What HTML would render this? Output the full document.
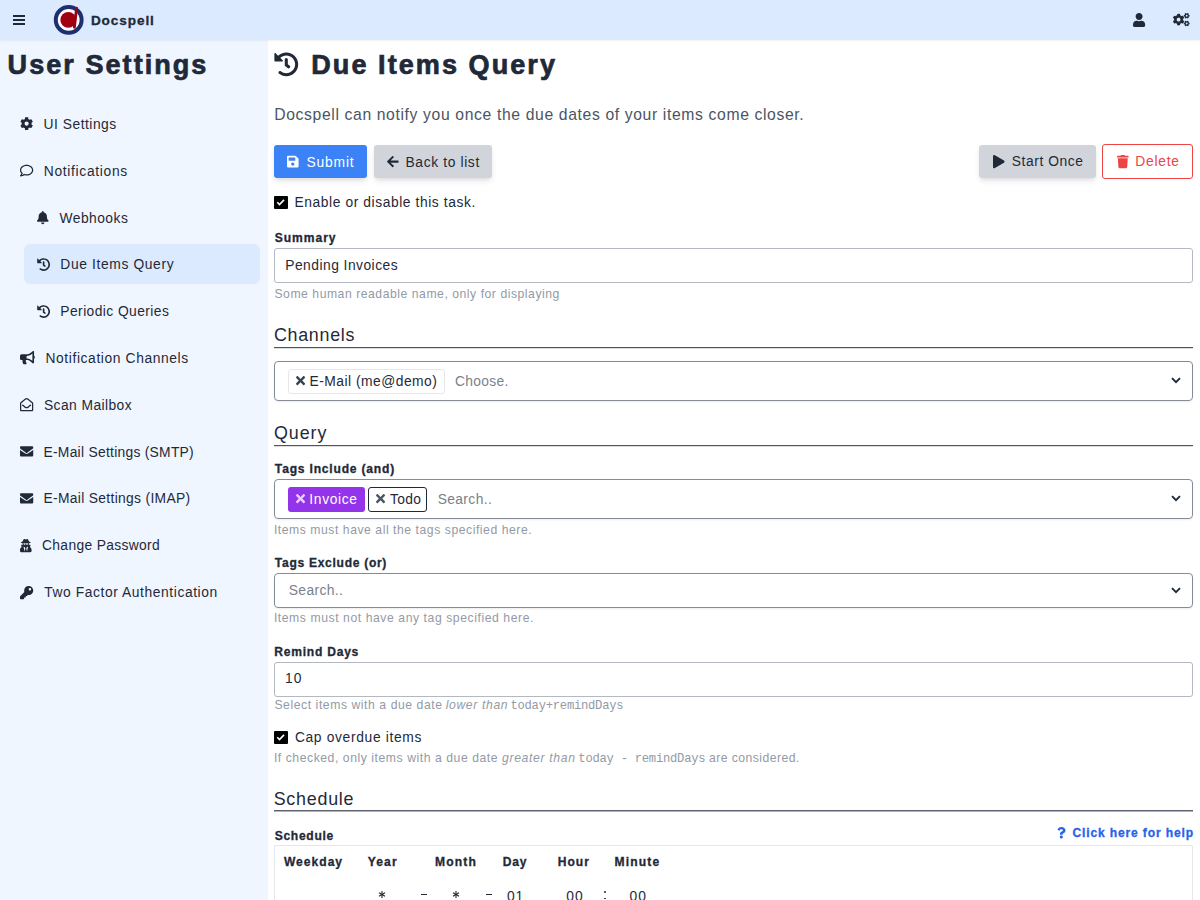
<!DOCTYPE html>
<html><head><meta charset="utf-8"><title>Docspell</title>
<style>
html,body{margin:0;padding:0;width:1200px;height:900px;overflow:hidden;background:#fff;font-family:"Liberation Sans",sans-serif}
.t{position:absolute;white-space:pre;line-height:20px;z-index:4}
.b{position:absolute}
.i{position:absolute;overflow:visible;z-index:3}
</style></head><body>
<div class=b style='left:0px;top:0px;width:1200px;height:40px;background:#dbeafe;box-shadow:0 1px 2px rgba(0,0,0,.06);z-index:2'></div>
<div class=b style='left:13px;top:15px;width:12px;height:2px;background:#1f2937;z-index:3'></div>
<div class=b style='left:13px;top:19px;width:12px;height:2px;background:#1f2937;z-index:3'></div>
<div class=b style='left:13px;top:23px;width:12px;height:2px;background:#1f2937;z-index:3'></div>
<svg class=i style='left:50px;top:2px;width:38px;height:36px;z-index:3' viewBox='0 0 38 36'><circle cx='18.7' cy='17.9' r='12.9' fill='#fff' stroke='#1d2f6f' stroke-width='4'/><circle cx='18.3' cy='17.9' r='7.9' fill='#a00012'/><line x1='26.6' y1='6.2' x2='24.4' y2='25.2' stroke='#a00012' stroke-width='2.9' stroke-linecap='round'/></svg>
<svg class=i style='z-index:3;left:1133.00px;top:13.04px;width:12.16px;height:13.90px' viewBox='0 0 448 512'><path fill='#1f2937' d='M224 256c70.7 0 128-57.3 128-128S294.7 0 224 0 96 57.3 96 128s57.3 128 128 128zm89.6 32h-16.7c-22.2 10.2-46.9 16-72.9 16s-50.6-5.8-72.9-16h-16.7C60.2 288 0 348.2 0 422.4V464c0 26.5 21.5 48 48 48h352c26.5 0 48-21.5 48-48v-41.6c0-74.2-60.2-134.4-134.4-134.4z'/></svg>
<svg class=i style='z-index:3;left:1173.30px;top:13.36px;width:16.62px;height:13.30px' viewBox='0 0 640 512'><path fill='#1f2937' d='M512.1 191l-8.2 14.3c-3 5.3-9.4 7.5-15.1 5.4-11.8-4.4-22.6-10.7-32.1-18.6-4.6-3.8-5.8-10.5-2.8-15.7l8.2-14.3c-6.9-8-12.3-17.3-15.9-27.4h-16.5c-6 0-11.2-4.3-12.2-10.3-2-12-2.1-24.6 0-37.1 1-6 6.2-10.4 12.2-10.4h16.5c3.6-10.1 9-19.4 15.9-27.4l-8.2-14.3c-3-5.2-1.9-11.9 2.8-15.7 9.5-7.9 20.4-14.2 32.1-18.6 5.7-2.1 12.1.1 15.1 5.4l8.2 14.3c10.5-1.9 21.2-1.9 31.7 0L552 6.3c3-5.3 9.4-7.5 15.1-5.4 11.8 4.4 22.6 10.7 32.1 18.6 4.6 3.8 5.8 10.5 2.8 15.7l-8.2 14.3c6.9 8 12.3 17.3 15.9 27.4h16.5c6 0 11.2 4.3 12.2 10.3 2 12 2.1 24.6 0 37.1-1 6-6.2 10.4-12.2 10.4h-16.5c-3.6 10.1-9 19.4-15.9 27.4l8.2 14.3c3 5.2 1.9 11.9-2.8 15.7-9.5 7.9-20.4 14.2-32.1 18.6-5.7 2.1-12.1-.1-15.1-5.4l-8.2-14.3c-10.4 1.9-21.2 1.9-31.7 0zm-10.5-58.8c38.5 29.6 82.4-14.3 52.8-52.8-38.5-29.7-82.4 14.3-52.8 52.8zM386.3 286.1l33.7 16.8c10.1 5.8 14.5 18.1 10.5 29.1-8.9 24.2-26.4 46.4-42.6 65.8-7.4 8.9-20.2 11.1-30.3 5.3l-29.1-16.8c-16 13.7-34.6 24.6-54.9 31.7v33.6c0 11.6-8.3 21.6-19.7 23.6-24.6 4.2-50.4 4.4-75.9 0-11.5-2-20-11.9-20-23.6V418c-20.3-7.2-38.9-18-54.9-31.7L74 403c-10 5.8-22.9 3.6-30.3-5.3-16.2-19.4-33.3-41.6-42.2-65.7-4-10.9.4-23.2 10.5-29.1l33.3-16.8c-3.9-20.9-3.9-42.4 0-63.4L12 205.8c-10.1-5.8-14.6-18.1-10.5-29 8.9-24.2 26-46.4 42.2-65.8 7.4-8.9 20.2-11.1 30.3-5.3l29.1 16.8c16-13.7 34.6-24.6 54.9-31.7V57.1c0-11.5 8.2-21.5 19.6-23.5 24.6-4.2 50.5-4.4 76-.1 11.5 2 20 11.9 20 23.6v33.6c20.3 7.2 38.9 18 54.9 31.7l29.1-16.8c10-5.8 22.9-3.6 30.3 5.3 16.2 19.4 33.2 41.6 42.1 65.8 4 10.9.1 23.2-10 29.1l-33.7 16.8c3.9 21 3.9 42.5 0 63.5zm-117.6 21.1c59.2-77-28.7-164.9-105.7-105.7-59.2 77 28.7 164.9 105.7 105.7zm243.4 182.7l-8.2 14.3c-3 5.3-9.4 7.5-15.1 5.4-11.8-4.4-22.6-10.7-32.1-18.6-4.6-3.8-5.8-10.5-2.8-15.7l8.2-14.3c-6.9-8-12.3-17.3-15.9-27.4h-16.5c-6 0-11.2-4.3-12.2-10.3-2-12-2.1-24.6 0-37.1 1-6 6.2-10.4 12.2-10.4h16.5c3.6-10.1 9-19.4 15.9-27.4l-8.2-14.3c-3-5.2-1.9-11.9 2.8-15.7 9.5-7.9 20.4-14.2 32.1-18.6 5.7-2.1 12.1.1 15.1 5.4l8.2 14.3c10.5-1.9 21.2-1.9 31.7 0l8.2-14.3c3-5.3 9.4-7.5 15.1-5.4 11.8 4.4 22.6 10.7 32.1 18.6 4.6 3.8 5.8 10.5 2.8 15.7l-8.2 14.3c6.9 8 12.3 17.3 15.9 27.4h16.5c6 0 11.2 4.3 12.2 10.3 2 12 2.1 24.6 0 37.1-1 6-6.2 10.4-12.2 10.4h-16.5c-3.6 10.1-9 19.4-15.9 27.4l8.2 14.3c3 5.2 1.9 11.9-2.8 15.7-9.5 7.9-20.4 14.2-32.1 18.6-5.7 2.1-12.1-.1-15.1-5.4l-8.2-14.3c-10.4 1.9-21.2 1.9-31.7 0zM501.6 431c38.5 29.6 82.4-14.3 52.8-52.8-38.5-29.6-82.4 14.3-52.8 52.8z'/></svg>
<div class=b style='left:0px;top:40px;width:267.5px;height:860px;background:#eff6ff'></div>
<div class=b style='left:23.7px;top:244px;width:236.5px;height:40px;background:#dbeafe;border-radius:6px'></div>
<svg class=i style='left:20.00px;top:117.41px;width:13.24px;height:13.24px' viewBox='0 0 512 512'><path fill='#1f2937' d='M487.4 315.7l-42.6-24.6c4.3-23.2 4.3-47 0-70.2l42.6-24.6c4.9-2.8 7.1-8.6 5.5-14-11.1-35.6-30-67.8-54.7-94.6-3.8-4.1-10-5.1-14.8-2.3L380.8 110c-17.9-15.4-38.5-27.3-60.8-35.1V25.8c0-5.6-3.9-10.5-9.4-11.7-36.7-8.2-74.3-7.8-109.200 0-5.5 1.2-9.4 6.1-9.4 11.7V75c-22.2 7.9-42.8 19.8-60.8 35.1L88.7 85.5c-4.9-2.8-11-1.9-14.8 2.3-24.7 26.7-43.6 58.9-54.7 94.6-1.7 5.4.6 11.2 5.5 14L67.3 221c-4.3 23.2-4.3 47 0 70.2l-42.6 24.6c-4.9 2.8-7.1 8.6-5.5 14 11.1 35.6 30 67.8 54.7 94.6 3.8 4.1 10 5.1 14.8 2.3l42.6-24.6c17.9 15.4 38.5 27.3 60.8 35.1v49.2c0 5.6 3.9 10.5 9.4 11.7 36.7 8.2 74.3 7.8 109.2 0 5.5-1.2 9.4-6.1 9.4-11.7v-49.2c22.2-7.900 42.8-19.8 60.8-35.1l42.6 24.6c4.9 2.8 11 1.9 14.8-2.3 24.7-26.7 43.6-58.9 54.7-94.6 1.5-5.5-.7-11.3-5.6-14.1zM256 336c-44.1 0-80-35.9-80-80s35.9-80 80-80 80 35.9 80 80-35.9 80-80 80z'/></svg>
<svg class=i style='left:20.00px;top:164.41px;width:13.24px;height:13.24px' viewBox='0 0 512 512'><path transform='translate(0 0)' fill='#1f2937' d='M256 32C114.6 32 0 125.1 0 240c0 47.6 19.9 91.2 52.9 126.3C38 405.7 7 439.1 6.5 439.5c-6.6 7-8.4 17.2-4.6 26S14.4 480 24 480c61.5 0 110-25.7 139.1-46.3C192 442.8 223.2 448 256 448c141.4 0 256-93.1 256-208S397.4 32 256 32zm0 368c-26.7 0-53.1-4.1-78.4-12.1l-22.7-7.2-19.5 13.8c-14.3 10.1-33.9 21.4-57.5 29 7.3-12.1 14.4-25.7 19.9-40.2l10.6-28.1-20.6-21.800C69.7 314.1 48 282.2 48 240c0-88.2 93.3-160 208-160s208 71.8 208 160-93.3 160-208 160z'/></svg>
<svg class=i style='left:36.70px;top:211.41px;width:11.59px;height:13.24px' viewBox='0 0 448 512'><path fill='#1f2937' d='M224 512c35.32 0 63.97-28.65 63.97-64H160.03c0 35.35 28.65 64 63.97 64zm215.39-149.71c-19.32-20.76-55.470-51.99-55.47-154.29 0-77.7-54.48-139.9-127.94-155.16V32c0-17.67-14.32-32-31.98-32s-31.98 14.33-31.98 32v20.84C118.56 68.1 64.08 130.3 64.08 208c0 102.3-36.15 133.53-55.47 154.29-6 6.45-8.66 14.16-8.61 21.71.11 16.4 12.98 32 32.1 32h383.8c19.12 0 32-15.6 32.1-32 .05-7.55-2.61-15.27-8.61-21.71z'/></svg>
<svg class=i style='left:36.70px;top:257.92px;width:13.24px;height:13.24px' viewBox='0 0 512 512'><path fill='#1f2937' d='M504 255.531c.253 136.64-111.18 248.372-247.82 248.468-59.015.042-113.223-20.53-155.822-54.911-11.077-8.94-11.905-25.541-1.839-35.607l11.267-11.267c8.609-8.609 22.353-9.551 31.891-1.984C173.062 425.135 212.781 440 256 440c101.705 0 184-82.311 184-184 0-101.705-82.311-184-184-184-48.814 0-93.149 18.969-126.068 49.932l50.754 50.754c10.08 10.08 2.941 27.314-11.313 27.314H24c-8.837 0-16-7.163-16-16V38.627c0-14.254 17.234-21.393 27.314-11.314l49.372 49.372C129.209 34.136 189.552 8 256 8c136.81 0 247.747 110.78 248 247.531zm-180.912 78.784l9.823-12.63c8.138-10.463 6.253-25.542-4.21-33.679L288 256.349V152c0-13.255-10.745-24-24-24h-16c-13.255 0-24 10.745-24 24v135.651l65.409 50.874c10.463 8.137 25.541 6.253 33.679-4.21z'/></svg>
<svg class=i style='left:36.70px;top:304.72px;width:13.24px;height:13.24px' viewBox='0 0 512 512'><path fill='#1f2937' d='M504 255.531c.253 136.64-111.18 248.372-247.82 248.468-59.015.042-113.223-20.53-155.822-54.911-11.077-8.94-11.905-25.541-1.839-35.607l11.267-11.267c8.609-8.609 22.353-9.551 31.891-1.984C173.062 425.135 212.781 440 256 440c101.705 0 184-82.311 184-184 0-101.705-82.311-184-184-184-48.814 0-93.149 18.969-126.068 49.932l50.754 50.754c10.08 10.08 2.941 27.314-11.313 27.314H24c-8.837 0-16-7.163-16-16V38.627c0-14.254 17.234-21.393 27.314-11.314l49.372 49.372C129.209 34.136 189.552 8 256 8c136.81 0 247.747 110.78 248 247.531zm-180.912 78.784l9.823-12.63c8.138-10.463 6.253-25.542-4.21-33.679L288 256.349V152c0-13.255-10.745-24-24-24h-16c-13.255 0-24 10.745-24 24v135.651l65.409 50.874c10.463 8.137 25.541 6.253 33.679-4.21z'/></svg>
<svg class=i style='left:20.00px;top:351.42px;width:14.89px;height:13.24px' viewBox='0 0 576 512'><path fill='#1f2937' d='M576 240c0-23.63-12.95-44.04-32-55.12V32.01C544 23.26 537.02 0 512 0c-7.12 0-14.19 2.38-19.98 7.020l-85.03 68.03C364.28 109.19 310.66 128 256 128H64c-35.35 0-64 28.65-64 64v96c0 35.35 28.65 64 64 64h33.7c-1.39 10.48-2.18 21.14-2.18 32 0 39.77 9.26 77.35 25.56 110.94 5.19 10.69 16.52 17.06 28.4 17.06h74.28c26.05 0 41.69-29.84 25.9-50.56-16.4-21.52-26.15-48.36-26.15-77.44 0-11.11 1.62-21.79 4.41-32H256c54.66 0 108.28 18.81 150.98 52.95l85.03 68.03a32.023 32.023 0 0 0 19.98 7.02c24.92 0 32-22.78 32-32V295.13C563.05 284.04 576 263.63 576 240zm-96 141.42l-33.05-26.44C392.95 311.78 325.12 288 256 288v-96c69.12 0 136.95-23.78 190.95-66.98L480 98.58v282.84z'/></svg>
<svg class=i style='left:20.00px;top:398.42px;width:13.24px;height:13.24px' viewBox='0 0 512 512'><path fill='#1f2937' d='M494.586 164.516c-4.697-3.883-111.723-89.95-135.251-108.657C337.231 38.191 299.437 0 256 0c-43.205 0-80.636 37.717-103.335 55.859-24.463 19.45-131.07 105.195-135.15 108.549A48.004 48.004 0 0 0 0 201.485V464c0 26.51 21.49 48 48 48h416c26.51 0 48-21.49 48-48V201.509a48 48 0 0 0-17.414-36.993zM464 458a6 6 0 0 1-6 6H54a6 6 0 0 1-6-6V204.347c0-1.813.816-3.526 2.226-4.665 15.87-12.814 108.793-87.554 132.364-106.293C200.755 78.88 232.398 48 256 48c23.693 0 55.857 31.369 73.41 45.389 23.573 18.741 116.503 93.493 132.366 106.316a5.99 5.99 0 0 1 2.224 4.663V458zm-31.991-187.704c4.249 5.159 3.465 12.795-1.745 16.981-28.975 23.283-59.274 47.597-70.929 56.863C336.636 362.283 299.205 400 256 400c-43.452 0-81.287-38.237-103.335-55.86-11.279-8.967-41.744-33.413-70.927-56.865-5.21-4.187-5.993-11.822-1.745-16.981l15.258-18.528c4.178-5.073 11.657-5.843 16.779-1.726 28.618 23.001 58.566 47.035 70.56 56.571C200.143 320.631 232.307 352 256 352c23.602 0 55.246-30.88 73.41-45.389 11.994-9.535 41.944-33.57 70.563-56.568 5.122-4.116 12.601-3.346 16.778 1.727l15.258 18.526z'/></svg>
<svg class=i style='left:20.00px;top:445.42px;width:13.24px;height:13.24px' viewBox='0 0 512 512'><path fill='#1f2937' d='M502.3 190.8c3.9-3.1 9.7-.2 9.7 4.7V400c0 26.5-21.5 48-48 48H48c-26.5 0-48-21.5-48-48V195.6c0-5 5.7-7.8 9.7-4.7 22.4 17.4 52.1 39.5 154.1 113.6 21.1 15.4 56.7 47.8 92.2 47.6 35.7.3 72-32.8 92.3-47.6 102-74.1 131.6-96.300 154-113.7zM256 320c23.2.4 56.6-42.4 73.4-54.6 132.7-96.3 142.8-104.7 173.4-128.7 5.8-4.5 9.2-11.5 9.2-18.9v-19c0-26.5-21.5-48-48-48H48C21.5 48 0 69.5 0 96v19c0 7.4 3.4 14.3 9.2 18.9 30.6 23.9 40.7 32.4 173.4 128.7 16.8 12.2 50.2 55.1 73.4 54.7z'/></svg>
<svg class=i style='left:20.00px;top:491.92px;width:13.24px;height:13.24px' viewBox='0 0 512 512'><path fill='#1f2937' d='M502.3 190.8c3.9-3.1 9.7-.2 9.7 4.7V400c0 26.5-21.5 48-48 48H48c-26.5 0-48-21.5-48-48V195.6c0-5 5.7-7.8 9.7-4.7 22.4 17.4 52.1 39.5 154.1 113.6 21.1 15.4 56.7 47.8 92.2 47.6 35.7.3 72-32.8 92.3-47.6 102-74.1 131.6-96.300 154-113.7zM256 320c23.2.4 56.6-42.4 73.4-54.6 132.7-96.3 142.8-104.7 173.4-128.7 5.8-4.5 9.2-11.5 9.2-18.9v-19c0-26.5-21.5-48-48-48H48C21.5 48 0 69.5 0 96v19c0 7.4 3.4 14.3 9.2 18.9 30.6 23.9 40.7 32.4 173.4 128.7 16.8 12.2 50.2 55.1 73.4 54.7z'/></svg>
<svg class=i style='left:19.60px;top:538.91px;width:11.59px;height:13.24px' viewBox='0 0 448 512'><path fill='#1f2937' d='M383.9 308.3l23.9-62.6c4-10.5-3.7-21.7-15-21.7h-58.5c11-18.9 17.8-40.6 17.8-64v-.3c39.2-7.8 64-19.1 64-31.7 0-13.3-27.3-25.1-70.1-33-9.2-32.8-27-65.8-40.6-82.8-9.5-11.9-25.9-15.6-39.5-8.8l-27.6 13.8c-9 4.5-19.6 4.5-28.6 0L182.1 3.4c-13.6-6.8-30-3.1-39.5 8.8-13.5 17-31.4 50-40.6 82.8-42.7 7.9-70 19.7-70 33 0 12.6 24.8 23.9 64 31.7v.3c0 23.4 6.8 45.1 17.8 64H56.3c-11.5 0-19.2 11.7-14.7 22.3l25.8 60.2C27.3 329.8 0 372.7 0 422.4v44.8C0 491.9 20.1 512 44.8 512h358.4c24.7 0 44.8-20.1 44.8-44.8v-44.8c0-48.4-25.8-90.4-64.1-114.1zM176 480l-41.6-192 49.6 32 24 40-32 120zm96 0l-32-120 24-40 49.6-32L272 480zm41.7-298.5c-3.9 11.9-7 24.6-16.5 33.4-10.1 9.3-48 22.4-64-25-2.8-8.4-15.4-8.4-18.3 0-17 50.2-56 32.4-64 25-9.5-8.8-12.7-21.5-16.5-33.4-.8-2.5-6.3-5.7-6.3-5.8v-10.8c28.3 3.6 61 5.8 96 5.8s67.7-2.1 96-5.8v10.8c-.1.1-5.6 3.2-6.4 5.8z'/></svg>
<svg class=i style='left:19.60px;top:585.81px;width:13.24px;height:13.24px' viewBox='0 0 512 512'><path fill='#1f2937' d='M512 176.001C512 273.203 433.202 352 336 352c-11.22 0-22.19-1.062-32.827-3.069l-24.012 27.014A23.999 23.999 0 0 1 261.223 384H224v40c0 13.255-10.745 24-24 24h-40v40c0 13.255-10.745 24-24 24H24c-13.255 0-24-10.745-24-24v-78.059c0-6.365 2.529-12.47 7.029-16.971l161.802-161.802C163.108 213.814 160 195.271 160 176 160 78.798 238.797.001 335.999 0 433.488-.001 512 78.511 512 176.001zM336 128c0 26.51 21.49 48 48 48s48-21.490 48-48-21.49-48-48-48-48 21.49-48 48z'/></svg>
<svg class=i style='left:274.30px;top:52.07px;width:24.60px;height:24.60px' viewBox='0 0 512 512'><path fill='#1f2937' d='M504 255.531c.253 136.64-111.18 248.372-247.82 248.468-59.015.042-113.223-20.53-155.822-54.911-11.077-8.94-11.905-25.541-1.839-35.607l11.267-11.267c8.609-8.609 22.353-9.551 31.891-1.984C173.062 425.135 212.781 440 256 440c101.705 0 184-82.311 184-184 0-101.705-82.311-184-184-184-48.814 0-93.149 18.969-126.068 49.932l50.754 50.754c10.08 10.08 2.941 27.314-11.313 27.314H24c-8.837 0-16-7.163-16-16V38.627c0-14.254 17.234-21.393 27.314-11.314l49.372 49.372C129.209 34.136 189.552 8 256 8c136.81 0 247.747 110.78 248 247.531zm-180.912 78.784l9.823-12.63c8.138-10.463 6.253-25.542-4.21-33.679L288 256.349V152c0-13.255-10.745-24-24-24h-16c-13.255 0-24 10.745-24 24v135.651l65.409 50.874c10.463 8.137 25.541 6.253 33.679-4.21z'/></svg>
<div class=b style='left:274px;top:145px;width:93px;height:33px;background:#3b82f6;border-radius:3px;box-shadow:0 4px 6px -1px rgba(0,0,0,.1),0 2px 4px -1px rgba(0,0,0,.06)'></div>
<svg class=i style='left:287.00px;top:155.01px;width:11.59px;height:13.24px' viewBox='0 0 448 512'><path fill='#ffffff' d='M433.941 129.941l-83.882-83.882A48 48 0 0 0 316.118 32H48C21.49 32 0 53.49 0 80v352c0 26.51 21.49 48 48 48h352c26.51 0 48-21.49 48-48V163.882a48 48 0 0 0-14.059-33.941zM224 416c-35.346 0-64-28.654-64-64 0-35.346 28.654-64 64-64s64 28.654 64 64c0 35.346-28.654 64-64 64zm96-304.52V212c0 6.627-5.373 12-12 12H76c-6.627 0-12-5.373-12-12V108c0-6.627 5.373-12 12-12h228.52c3.183 0 6.235 1.264 8.485 3.515l3.48 3.48A11.996 11.996 0 0 1 320 111.48z'/></svg>
<div class=b style='left:374px;top:145px;width:118px;height:33px;background:#d1d5db;border-radius:3px;box-shadow:0 4px 6px -1px rgba(0,0,0,.1),0 2px 4px -1px rgba(0,0,0,.06)'></div>
<svg class=i style='left:386.80px;top:155.01px;width:11.59px;height:13.24px' viewBox='0 0 448 512'><path fill='#1f2937' d='M257.5 445.1l-22.2 22.2c-9.4 9.4-24.6 9.4-33.9 0L7 273c-9.4-9.4-9.4-24.6 0-33.9L201.4 44.7c9.4-9.4 24.6-9.4 33.9 0l22.2 22.2c9.5 9.5 9.3 25-.4 34.3L136.6 216H424c13.3 0 24 10.7 24 24v32c0 13.3-10.7 24-24 24H136.6l120.5 114.8c9.8 9.3 10 24.8.4 34.3z'/></svg>
<div class=b style='left:979px;top:145px;width:117px;height:33px;background:#d1d5db;border-radius:3px;box-shadow:0 4px 6px -1px rgba(0,0,0,.1),0 2px 4px -1px rgba(0,0,0,.06)'></div>
<svg class=i style='left:992.50px;top:154.61px;width:11.59px;height:13.24px' viewBox='0 0 448 512'><path fill='#1f2937' d='M424.4 214.7L72.4 6.6C43.8-10.3 0 6.1 0 47.9V464c0 37.5 40.7 60.1 72.4 41.3l352-208c31.4-18.5 31.5-64.1 0-82.6z'/></svg>
<div class=b style='left:1102px;top:144px;width:91px;height:35px;background:#fff;border:1px solid #ef4444;border-radius:3px;box-sizing:border-box'></div>
<svg class=i style='left:1116.80px;top:154.61px;width:11.59px;height:13.24px' viewBox='0 0 448 512'><path fill='#ef4444' d='M432 32H312l-9.4-18.7A24 24 0 0 0 281.1 0H166.8a23.72 23.72 0 0 0-21.4 13.3L136 32H16A16 16 0 0 0 0 48v32a16 16 0 0 0 16 16h416a16 16 0 0 0 16-16V48a16 16 0 0 0-16-16zM53.2 467a48 48 0 0 0 47.9 45h245.8a48 48 0 0 0 47.9-45L416 128H32z'/></svg>
<div class=b style='left:274.2px;top:196px;width:13.6px;height:13px;background:#000;border-radius:1px'></div><svg class=i style='left:274.2px;top:196px;width:13.6px;height:13px' viewBox='0 0 13.6 13'><polyline points='3.3,6.3 5.5,8.6 10,3.9' fill='none' stroke='#fff' stroke-width='1.6'/></svg>
<div class=b style='left:274px;top:248px;width:919px;height:35px;border:1px solid #b3b8c1;border-radius:3px;box-sizing:border-box'></div>
<div class=b style='left:274px;top:347px;width:919px;height:1px;background:#4b5563;box-shadow:0 1px 0 rgba(75,85,99,.2)'></div>
<div class=b style='left:274px;top:361px;width:919px;height:40px;border:1px solid #858c98;border-radius:4px;box-sizing:border-box;box-shadow:0 1px 2px rgba(0,0,0,.08)'></div>
<div class=b style='left:288px;top:369px;width:157px;height:25px;border:1px solid #e5e7eb;border-radius:3px;box-sizing:border-box;background:#fff'></div>
<svg class=i style='left:296.00px;top:374.42px;width:9.10px;height:13.24px' viewBox='0 0 352 512'><path fill='#374151' d='M242.72 256l100.07-100.07c12.28-12.28 12.28-32.19 0-44.48l-22.24-22.24c-12.28-12.28-32.19-12.28-44.48 0L176 189.28 75.93 89.21c-12.28-12.28-32.19-12.28-44.48 0L9.21 111.45c-12.28 12.28-12.28 32.19 0 44.48L109.28 256 9.21 356.07c-12.28 12.28-12.28 32.19 0 44.48l22.24 22.24c12.28 12.28 32.2 12.28 44.48 0L176 322.72l100.07 100.07c12.28 12.28 32.2 12.28 44.48 0l22.24-22.24c12.28-12.28 12.28-32.19 0-44.48L242.72 256z'/></svg>
<svg class=i style='left:1171px;top:377.4px;width:10px;height:7px' viewBox='0 0 10 7'><polyline points='1,1.2 5,5.2 9,1.2' fill='none' stroke='#1f2937' stroke-width='1.9'/></svg>
<div class=b style='left:274px;top:445px;width:919px;height:1px;background:#4b5563;box-shadow:0 1px 0 rgba(75,85,99,.2)'></div>
<div class=b style='left:274px;top:479px;width:919px;height:40px;border:1px solid #858c98;border-radius:4px;box-sizing:border-box;box-shadow:0 1px 2px rgba(0,0,0,.08)'></div>
<div class=b style='left:288px;top:487px;width:77px;height:25px;background:#9333ea;border-radius:3px'></div>
<svg class=i style='left:296.00px;top:492.42px;width:9.10px;height:13.24px' viewBox='0 0 352 512'><path fill='#e6d3fb' d='M242.72 256l100.07-100.07c12.28-12.28 12.28-32.19 0-44.48l-22.24-22.24c-12.28-12.28-32.19-12.28-44.48 0L176 189.28 75.93 89.21c-12.28-12.28-32.19-12.28-44.48 0L9.21 111.45c-12.28 12.28-12.28 32.19 0 44.48L109.28 256 9.21 356.07c-12.28 12.28-12.28 32.19 0 44.48l22.24 22.24c12.28 12.28 32.2 12.28 44.48 0L176 322.72l100.07 100.07c12.28 12.28 32.2 12.28 44.48 0l22.24-22.24c12.28-12.28 12.28-32.19 0-44.48L242.72 256z'/></svg>
<div class=b style='left:368px;top:487px;width:59px;height:25px;border:1px solid #1f2937;border-radius:3px;box-sizing:border-box'></div>
<svg class=i style='left:375.80px;top:492.42px;width:9.10px;height:13.24px' viewBox='0 0 352 512'><path fill='#4b5563' d='M242.72 256l100.07-100.07c12.28-12.28 12.28-32.19 0-44.48l-22.24-22.24c-12.28-12.28-32.19-12.28-44.48 0L176 189.28 75.93 89.21c-12.28-12.28-32.19-12.28-44.48 0L9.21 111.45c-12.28 12.28-12.28 32.19 0 44.48L109.28 256 9.21 356.07c-12.28 12.28-12.28 32.19 0 44.48l22.24 22.24c12.28 12.28 32.2 12.28 44.48 0L176 322.72l100.07 100.07c12.28 12.28 32.2 12.28 44.48 0l22.24-22.24c12.28-12.28 12.28-32.19 0-44.48L242.72 256z'/></svg>
<svg class=i style='left:1171px;top:495.2px;width:10px;height:7px' viewBox='0 0 10 7'><polyline points='1,1.2 5,5.2 9,1.2' fill='none' stroke='#1f2937' stroke-width='1.9'/></svg>
<div class=b style='left:274px;top:573px;width:919px;height:35px;border:1px solid #858c98;border-radius:4px;box-sizing:border-box;box-shadow:0 1px 2px rgba(0,0,0,.08)'></div>
<svg class=i style='left:1171px;top:586.6px;width:10px;height:7px' viewBox='0 0 10 7'><polyline points='1,1.2 5,5.2 9,1.2' fill='none' stroke='#1f2937' stroke-width='1.9'/></svg>
<div class=b style='left:274px;top:662px;width:919px;height:35px;border:1px solid #b3b8c1;border-radius:3px;box-sizing:border-box'></div>
<div class=b style='left:274px;top:731.4px;width:13.6px;height:13px;background:#000;border-radius:1px'></div><svg class=i style='left:274px;top:731.4px;width:13.6px;height:13px' viewBox='0 0 13.6 13'><polyline points='3.3,6.3 5.5,8.6 10,3.9' fill='none' stroke='#fff' stroke-width='1.6'/></svg>
<div class=b style='left:274px;top:810px;width:919px;height:1px;background:#5b6270;box-shadow:0 1px 0 rgba(107,114,128,.55)'></div>
<svg class=i style='left:1057.30px;top:827.39px;width:8.66px;height:11.55px' viewBox='0 0 384 512'><path fill='#2563eb' d='M202.021 0C122.202 0 70.503 32.703 29.914 91.026c-7.363 10.58-5.093 25.086 5.178 32.874l43.138 32.709c10.373 7.865 25.132 6.026 33.253-4.148 25.049-31.381 43.63-49.449 82.757-49.449 30.764 0 68.816 19.799 68.816 49.631 0 22.552-18.617 34.134-48.993 51.164-35.423 19.86-82.299 44.576-82.299 106.405V320c0 13.255 10.745 24 24 24h72.471c13.255 0 24-10.745 24-24v-5.773c0-42.86 125.268-44.645 125.268-160.627C377.504 66.256 286.902 0 202.021 0zM192 373.459c-38.196 0-69.271 31.075-69.271 69.271 0 38.195 31.075 69.27 69.271 69.27s69.271-31.075 69.271-69.271-31.075-69.27-69.271-69.27z'/></svg>
<div class=b style='left:274px;top:845px;width:919px;height:80px;border:1px solid #e5e7eb;border-radius:1px;box-sizing:border-box'></div>
<svg class=i style='left:377.9px;top:890px;width:8px;height:10px' viewBox='-4 -4 8 10'><g stroke='#1f2937' stroke-width='1.1'><line x1='0' y1='-3' x2='0' y2='4'/><line x1='-3' y1='-1.2' x2='3' y2='2.2'/><line x1='-3' y1='2.2' x2='3' y2='-1.2'/></g></svg>
<svg class=i style='left:452.4px;top:890px;width:8px;height:10px' viewBox='-4 -4 8 10'><g stroke='#1f2937' stroke-width='1.1'><line x1='0' y1='-3' x2='0' y2='4'/><line x1='-3' y1='-1.2' x2='3' y2='2.2'/><line x1='-3' y1='2.2' x2='3' y2='-1.2'/></g></svg>
<div class=b style='left:421.2px;top:894.2px;width:5.8px;height:1.3px;background:#1f2937'></div>
<div class=b style='left:485.8px;top:894.2px;width:5.8px;height:1.3px;background:#1f2937'></div>
<div class=b style='left:604.2px;top:891px;width:1.8px;height:1.8px;background:#1f2937;border-radius:1px'></div>
<div class=b style='left:604.2px;top:897.5px;width:1.8px;height:1.8px;background:#1f2937;border-radius:1px'></div>
<div class=t style='left:90.89px;top:11px;font-family:"Liberation Sans";font-weight:700;font-size:13.58px;letter-spacing:0.913px;color:#1f2937;-webkit-text-stroke:0.30px #1f2937;'>Docspell</div>
<div class=t style='left:7.57px;top:55px;font-family:"Liberation Sans";font-weight:700;font-size:27.07px;letter-spacing:2.034px;color:#1f2937;-webkit-text-stroke:0.70px #1f2937;'>User Settings</div>
<div class=t style='left:43.53px;top:114px;font-family:"Liberation Sans";font-size:13.84px;letter-spacing:0.507px;color:#1f2937;'>UI Settings</div>
<div class=t style='left:43.77px;top:161px;font-family:"Liberation Sans";font-size:13.84px;letter-spacing:0.681px;color:#1f2937;'>Notifications</div>
<div class=t style='left:59.54px;top:208px;font-family:"Liberation Sans";font-size:13.84px;letter-spacing:0.455px;color:#1f2937;'>Webhooks</div>
<div class=t style='left:60.37px;top:254px;font-family:"Liberation Sans";font-size:13.84px;letter-spacing:0.619px;color:#1f2937;'>Due Items Query</div>
<div class=t style='left:60.37px;top:301px;font-family:"Liberation Sans";font-size:13.84px;letter-spacing:0.417px;color:#1f2937;'>Periodic Queries</div>
<div class=t style='left:45.47px;top:348px;font-family:"Liberation Sans";font-size:13.84px;letter-spacing:0.603px;color:#1f2937;'>Notification Channels</div>
<div class=t style='left:43.97px;top:395px;font-family:"Liberation Sans";font-size:13.84px;letter-spacing:0.425px;color:#1f2937;'>Scan Mailbox</div>
<div class=t style='left:43.47px;top:442px;font-family:"Liberation Sans";font-size:13.84px;letter-spacing:0.276px;color:#1f2937;'>E-Mail Settings (SMTP)</div>
<div class=t style='left:43.47px;top:488px;font-family:"Liberation Sans";font-size:13.84px;letter-spacing:0.325px;color:#1f2937;'>E-Mail Settings (IMAP)</div>
<div class=t style='left:42.00px;top:535px;font-family:"Liberation Sans";font-size:13.84px;letter-spacing:0.338px;color:#1f2937;'>Change Password</div>
<div class=t style='left:44.19px;top:582px;font-family:"Liberation Sans";font-size:13.84px;letter-spacing:0.580px;color:#1f2937;'>Two Factor Authentication</div>
<div class=t style='left:311.29px;top:55px;font-family:"Liberation Sans";font-weight:700;font-size:27.07px;letter-spacing:2.042px;color:#1f2937;-webkit-text-stroke:0.70px #1f2937;'>Due Items Query</div>
<div class=t style='left:274.21px;top:105px;font-family:"Liberation Sans";font-size:15.73px;letter-spacing:0.630px;color:#4b5563;'>Docspell can notify you once the due dates of your items come closer.</div>
<div class=t style='left:306.57px;top:152px;font-family:"Liberation Sans";font-size:13.84px;letter-spacing:0.799px;color:#ffffff;'>Submit</div>
<div class=t style='left:405.47px;top:152px;font-family:"Liberation Sans";font-size:13.84px;letter-spacing:0.627px;color:#1f2937;'>Back to list</div>
<div class=t style='left:1011.77px;top:151px;font-family:"Liberation Sans";font-size:13.84px;letter-spacing:0.572px;color:#1f2937;'>Start Once</div>
<div class=t style='left:1135.27px;top:151px;font-family:"Liberation Sans";font-size:13.84px;letter-spacing:0.749px;color:#ef4444;'>Delete</div>
<div class=t style='left:294.47px;top:192px;font-family:"Liberation Sans";font-size:13.84px;letter-spacing:0.574px;color:#1f2937;'>Enable or disable this task.</div>
<div class=t style='left:274.75px;top:228px;font-family:"Liberation Sans";font-weight:700;font-size:12.07px;letter-spacing:0.966px;color:#1f2937;-webkit-text-stroke:0.30px #1f2937;'>Summary</div>
<div class=t style='left:285.27px;top:255px;font-family:"Liberation Sans";font-size:13.84px;letter-spacing:0.467px;color:#1f2937;'>Pending Invoices</div>
<div class=t style='left:274.45px;top:284px;font-family:"Liberation Sans";font-size:12.18px;letter-spacing:0.540px;color:#939aa6;'>Some human readable name, only for displaying</div>
<div class=t style='left:273.89px;top:325px;font-family:"Liberation Sans";font-size:17.87px;letter-spacing:0.726px;color:#1f2937;'>Channels</div>
<div class=t style='left:309.47px;top:371px;font-family:"Liberation Sans";font-size:13.84px;letter-spacing:0.488px;color:#1f2937;'>E-Mail (me@demo)</div>
<div class=t style='left:454.90px;top:371px;font-family:"Liberation Sans";font-size:13.84px;letter-spacing:0.328px;color:#7b818c;'>Choose.</div>
<div class=t style='left:273.95px;top:423px;font-family:"Liberation Sans";font-size:17.87px;letter-spacing:0.959px;color:#1f2937;'>Query</div>
<div class=t style='left:274.86px;top:459px;font-family:"Liberation Sans";font-weight:700;font-size:12.07px;letter-spacing:0.805px;color:#1f2937;-webkit-text-stroke:0.30px #1f2937;'>Tags Include (and)</div>
<div class=t style='left:309.32px;top:489px;font-family:"Liberation Sans";font-size:13.84px;letter-spacing:0.655px;color:#ffffff;'>Invoice</div>
<div class=t style='left:390.09px;top:489px;font-family:"Liberation Sans";font-size:13.84px;letter-spacing:0.334px;color:#1f2937;'>Todo</div>
<div class=t style='left:437.67px;top:489px;font-family:"Liberation Sans";font-size:13.84px;letter-spacing:0.371px;color:#7b818c;'>Search..</div>
<div class=t style='left:273.88px;top:520px;font-family:"Liberation Sans";font-size:12.18px;letter-spacing:0.550px;color:#939aa6;'>Items must have all the tags specified here.</div>
<div class=t style='left:274.86px;top:553px;font-family:"Liberation Sans";font-weight:700;font-size:12.07px;letter-spacing:0.700px;color:#1f2937;-webkit-text-stroke:0.30px #1f2937;'>Tags Exclude (or)</div>
<div class=t style='left:288.77px;top:580px;font-family:"Liberation Sans";font-size:13.84px;letter-spacing:0.371px;color:#7b818c;'>Search..</div>
<div class=t style='left:273.88px;top:608px;font-family:"Liberation Sans";font-size:12.18px;letter-spacing:0.572px;color:#939aa6;'>Items must not have any tag specified here.</div>
<div class=t style='left:274.19px;top:642px;font-family:"Liberation Sans";font-weight:700;font-size:12.07px;letter-spacing:0.771px;color:#1f2937;-webkit-text-stroke:0.30px #1f2937;'>Remind Days</div>
<div class=t style='left:285.05px;top:668px;font-family:"Liberation Sans";font-size:13.84px;letter-spacing:0.888px;color:#1f2937;'>10</div>
<div class=t style='left:274.45px;top:695px;font-family:"Liberation Sans";font-size:12.18px;letter-spacing:0.567px;color:#939aa6;'>Select items with a due date</div>
<div class=t style='left:445.70px;top:695px;font-family:"Liberation Sans";font-style:italic;font-size:12.18px;letter-spacing:0.638px;color:#939aa6;'>lower than</div>
<div class=t style='left:510.47px;top:696px;font-family:"Liberation Mono";font-size:12.18px;letter-spacing:-0.253px;color:#939aa6;'>today+remindDays</div>
<div class=t style='left:294.90px;top:727px;font-family:"Liberation Sans";font-size:13.84px;letter-spacing:0.650px;color:#1f2937;'>Cap overdue items</div>
<div class=t style='left:273.88px;top:748px;font-family:"Liberation Sans";font-size:12.18px;letter-spacing:0.559px;color:#939aa6;'>If checked, only items with a due date</div>
<div class=t style='left:501.98px;top:748px;font-family:"Liberation Sans";font-style:italic;font-size:12.18px;letter-spacing:0.669px;color:#939aa6;'>greater than</div>
<div class=t style='left:578.37px;top:749px;font-family:"Liberation Mono";font-size:12.18px;letter-spacing:-0.253px;color:#939aa6;'>today - remindDays</div>
<div class=t style='left:708.98px;top:748px;font-family:"Liberation Sans";font-size:12.18px;letter-spacing:0.457px;color:#939aa6;'>are considered.</div>
<div class=t style='left:273.69px;top:789px;font-family:"Liberation Sans";font-size:17.87px;letter-spacing:0.761px;color:#1f2937;'>Schedule</div>
<div class=t style='left:274.65px;top:826px;font-family:"Liberation Sans";font-weight:700;font-size:12.07px;letter-spacing:0.716px;color:#1f2937;-webkit-text-stroke:0.30px #1f2937;'>Schedule</div>
<div class=t style='left:1072.50px;top:823px;font-family:"Liberation Sans";font-weight:700;font-size:12.07px;letter-spacing:0.849px;color:#2563eb;-webkit-text-stroke:0.30px #2563eb;'>Click here for help</div>
<div class=t style='left:283.89px;top:852px;font-family:"Liberation Sans";font-weight:700;font-size:12.07px;letter-spacing:1.019px;color:#1f2937;-webkit-text-stroke:0.30px #1f2937;'>Weekday</div>
<div class=t style='left:367.79px;top:852px;font-family:"Liberation Sans";font-weight:700;font-size:12.07px;letter-spacing:1.108px;color:#1f2937;-webkit-text-stroke:0.30px #1f2937;'>Year</div>
<div class=t style='left:435.09px;top:852px;font-family:"Liberation Sans";font-weight:700;font-size:12.07px;letter-spacing:1.140px;color:#1f2937;-webkit-text-stroke:0.30px #1f2937;'>Month</div>
<div class=t style='left:502.69px;top:852px;font-family:"Liberation Sans";font-weight:700;font-size:12.07px;letter-spacing:0.878px;color:#1f2937;-webkit-text-stroke:0.30px #1f2937;'>Day</div>
<div class=t style='left:557.69px;top:852px;font-family:"Liberation Sans";font-weight:700;font-size:12.07px;letter-spacing:1.001px;color:#1f2937;-webkit-text-stroke:0.30px #1f2937;'>Hour</div>
<div class=t style='left:614.49px;top:852px;font-family:"Liberation Sans";font-weight:700;font-size:12.07px;letter-spacing:1.148px;color:#1f2937;-webkit-text-stroke:0.30px #1f2937;'>Minute</div>
<div class=t style='left:507.06px;top:886px;font-family:"Liberation Sans";font-size:13.84px;letter-spacing:0.752px;color:#1f2937;'>01</div>
<div class=t style='left:566.26px;top:886px;font-family:"Liberation Sans";font-size:13.84px;letter-spacing:0.963px;color:#1f2937;'>00</div>
<div class=t style='left:629.56px;top:886px;font-family:"Liberation Sans";font-size:13.84px;letter-spacing:0.963px;color:#1f2937;'>00</div>
</body></html>
